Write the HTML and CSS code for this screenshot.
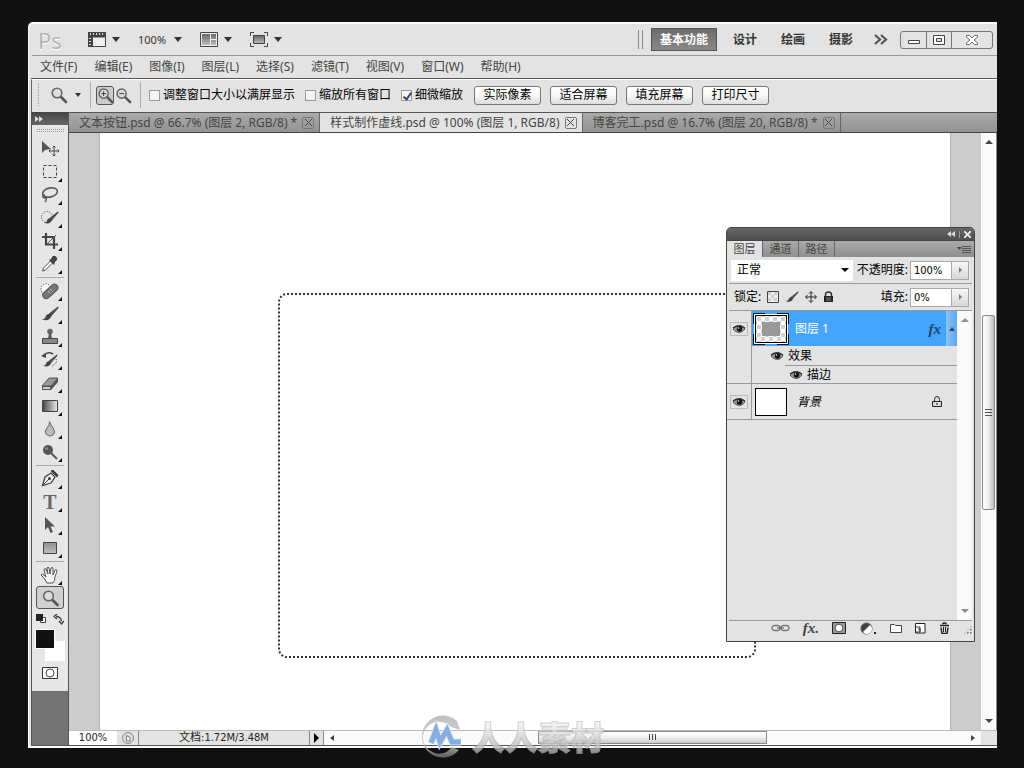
FILE: index.html
```html
<!DOCTYPE html>
<html lang="zh-CN">
<head>
<meta charset="utf-8">
<title>Photoshop</title>
<link rel="stylesheet" href="styles.css">
</head>
<body>
<svg class="defs" aria-hidden="true">
  <defs>
    <linearGradient id="metal" x1="0" y1="0" x2="0" y2="1"><stop offset="0" stop-color="#666"/><stop offset="1" stop-color="#bbb"/></linearGradient>
    <linearGradient id="soft" x1="0" y1="0" x2="0" y2="1"><stop offset="0" stop-color="#909090"/><stop offset="1" stop-color="#c0c0c0"/></linearGradient>
    <linearGradient id="fade"><stop offset="0" stop-color="#444"/><stop offset="1" stop-color="#eee"/></linearGradient>
    <symbol id="eye" viewBox="0 0 14 10"><path d="M1 5Q4 1 8 1.500Q12 2 13 5Q10 9 6.500 8.500Q3 8 1 5Z" fill="#999" stroke="#555"/><path d="M1 4Q6 0 13 4" fill="none" stroke="#333" stroke-width="1.300"/><circle cx="7.500" cy="5" r="2.700" fill="#111"/><circle cx="6.500" cy="4" r=".8" fill="#fff"/></symbol>
    <symbol id="glass" viewBox="0 0 18 18"><path d="M10.500 10.500L16 16" stroke="#555" stroke-width="2.600" stroke-linecap="round"/><circle cx="7" cy="7" r="4.800" fill="#ddd" stroke="#666" stroke-width="1.600"/></symbol>
    <symbol id="brush" viewBox="0 0 18 16"><path d="M17 1L8 8l2 2L17 2Z" fill="#555" stroke="#444"/><path d="M8.500 8Q5 8 4.500 11Q4 13 1 13.500Q8 16 10.500 10Z" fill="#444"/></symbol>
    <pattern id="checks" width="8" height="8" patternUnits="userSpaceOnUse"><path d="M0 0h8v8H0Z" fill="#fff"/><path d="M0 0h4v4H0ZM4 4h4v4H4Z" fill="#d0d0d0"/></pattern>
  </defs>
</svg>
<main class="window">
  <header class="appbar">
    <div class="logo">Ps</div>
    <button class="view" aria-label="查看额外内容"><svg width="18" height="15"><path d="M0 0h18v5H5v10H0Z" fill="#444"/><path d="M5 5h12.500v9.500H5" fill="#eee" stroke="#444"/><path d="M2.500 1v2M5.500 1v2M8.500 1v2M11.500 1v2M14.500 1v2M1 6.500h2M1 9.500h2M1 12.500h2" stroke="#ddd"/></svg><i class="caret"></i></button>
    <button class="view zoomlevel">100%<i class="caret"></i></button>
    <button class="view" aria-label="排列文档"><svg width="18" height="15"><path d="M.5.5h17v14H.5Z" fill="#eee" stroke="#444"/><path d="M2 2h8v11H2ZM11 2h5v5h-5ZM11 8h5v5h-5Z" fill="url(#metal)"/></svg><i class="caret"></i></button>
    <button class="view" aria-label="屏幕模式"><svg width="18" height="15"><path d="M.5 4V.5H4M14 .5h3.500V4M17.500 11v3.500H14M4 14.500H.5V11" fill="none" stroke="#444"/><path d="M3.500 3.500h11v8h-11Z" fill="url(#metal)" stroke="#444"/></svg><i class="caret"></i></button>
    <nav class="workspaces">
      <button class="workspace active">基本功能</button><button class="workspace">设计</button><button class="workspace">绘画</button><button class="workspace">摄影</button>
    </nav>
    <button class="more" aria-label="更多"><svg width="15" height="11"><path d="M1 1l5 4.500L1 10M7 1l5 4.500L7 10" fill="none" stroke="#555" stroke-width="2.200"/></svg></button>
    <div class="controls">
      <button aria-label="最小化"><svg width="14" height="12"><path d="M1.500 6.500h11v3h-11Z" fill="#fff" stroke="#444"/></svg></button><button aria-label="还原"><svg width="14" height="12"><path d="M1.500 1.500h11v9h-11Z" fill="#fff" stroke="#444"/><path d="M4.500 4.500h5v3h-5Z" fill="#ddd" stroke="#444"/></svg></button><button class="exit" aria-label="关闭"><svg width="14" height="12"><path d="M1.500 1.500h3L7 4l2.500-2.500h3V3L9 6l3.500 3v1.500h-3L7 8l-2.500 2.500h-3V9L5 6 1.500 3Z" fill="#fff" stroke="#666"/></svg></button>
    </div>
  </header>
  <nav class="menubar">
    <button>文件(F)</button><button>编辑(E)</button><button>图像(I)</button><button>图层(L)</button><button>选择(S)</button><button>滤镜(T)</button><button>视图(V)</button><button>窗口(W)</button><button>帮助(H)</button>
  </nav>
  <section class="options">
    <span class="grip"></span>
    <button class="preset" aria-label="缩放工具"><svg width="18" height="18"><use href="#glass"/></svg><i class="caret small"></i></button>
    <div class="zooms">
      <button class="pressed" aria-label="放大"><svg width="17" height="17" viewBox="0 0 18 18"><use href="#glass"/><path d="M4.500 7h5M7 4.500v5" stroke="#333"/></svg></button>
      <button aria-label="缩小"><svg width="17" height="17" viewBox="0 0 18 18"><use href="#glass"/><path d="M4.500 7h5" stroke="#333"/></svg></button>
    </div>
    <label class="check"><input type="checkbox">调整窗口大小以满屏显示</label>
    <label class="check"><input type="checkbox">缩放所有窗口</label>
    <label class="check"><input type="checkbox" checked>细微缩放</label>
    <div class="commands"><button>实际像素</button><button>适合屏幕</button><button>填充屏幕</button><button>打印尺寸</button></div>
  </section>
  <div class="workarea">
    <aside class="toolcolumn">
      <button class="expand" aria-label="展开"><svg width="8" height="6"><path d="M0 0l4 3-4 3ZM4 0l4 3-4 3Z" fill="#ddd"/></svg></button>
      <div class="toolbox">
        <span class="dots"></span>
        <div class="tools">
          <button class="tool plain" aria-label="移动"><svg width="20" height="18"><path d="M2 1v12l3-3 6-1Z" fill="#555"/><path d="M14 6v10M9 11h10M12.500 7.500L14 6l1.500 1.500M12.500 14.500L14 16l1.500-1.500M10.500 9.500L9 11l1.500 1.500M17.500 9.500L19 11l-1.500 1.500" fill="none" stroke="#444"/></svg></button>
          <button class="tool" aria-label="矩形选框"><svg width="20" height="18"><path d="M3.500 2.500h13v12h-13Z" fill="none" stroke="#444" stroke-dasharray="3 2"/></svg></button>
          <button class="tool" aria-label="套索"><svg width="20" height="18"><ellipse cx="10" cy="6.500" rx="7.500" ry="4.500" fill="none" stroke="#555" stroke-width="1.600" transform="rotate(-12 10 6.500)"/><path d="M5 9q-3 0-2 2t3 0q1 3-1 5" fill="none" stroke="#555" stroke-width="1.400"/></svg></button>
          <button class="tool" aria-label="快速选择"><svg width="20" height="18"><circle cx="7" cy="8" r="5.500" fill="none" stroke="#333" stroke-dasharray="1 1.500"/><use href="#brush" x="3" y="2" width="16" height="14"/></svg></button>
          <button class="tool" aria-label="裁剪"><svg width="20" height="18"><path d="M6 1v11.500h12M2 5h12v12" fill="none" stroke="#444" stroke-width="2.200"/><path d="M6 13L16 3" stroke="#555"/></svg></button>
          <button class="tool" aria-label="吸管"><svg width="20" height="18"><path d="M2.500 16l1-3 7-7 2 2-7 7Z" fill="#fff" stroke="#555"/><path d="M9 5l5 5 1-3 2-2q1-2-1-3.500T12 2l-1 2Z" fill="#444"/></svg></button>
        </div>
        <div class="tools">
          <button class="tool" aria-label="修复画笔"><svg width="20" height="18"><circle cx="6" cy="7" r="5" fill="#fff" stroke="#333" stroke-dasharray="1 1.500"/><rect x="1" y="6" width="18" height="7" rx="3.500" fill="#777" stroke="#555" transform="rotate(-42 10 9)"/><path d="M8 9l3 3M10 7l3 3" stroke="#ddd" stroke-dasharray="1 1"/></svg></button>
          <button class="tool" aria-label="画笔"><svg width="20" height="18"><use href="#brush" x="1" y="1" width="18" height="16"/></svg></button>
          <button class="tool" aria-label="仿制图章"><svg width="20" height="18"><circle cx="10" cy="3.500" r="2.800" fill="#666"/><path d="M9 5h2l1 6H8Z" fill="#555"/><path d="M2.500 10.500h15v5h-15Z" fill="#888" stroke="#444"/></svg></button>
          <button class="tool" aria-label="历史记录画笔"><svg width="20" height="18"><use href="#brush" x="2" y="3" width="16" height="14"/><path d="M13 3Q8 0 4 4" fill="none" stroke="#444" stroke-width="1.500"/><path d="M1 5l5-3v5Z" fill="#444"/><path d="M16 8q2 4-4 7" fill="none" stroke="#444" stroke-dasharray="1 1.500"/></svg></button>
          <button class="tool" aria-label="橡皮擦"><svg width="20" height="18"><path d="M2 12L9 4h9l-7 8Z" fill="#999" stroke="#555"/><path d="M2 12h9v4H2ZM11 12l7-8v4l-7 8Z" fill="#555"/><path d="M3 13h7v2H3Z" fill="#ccc"/></svg></button>
          <button class="tool" aria-label="渐变"><svg width="20" height="18"><path d="M2.500 3.500h15v11h-15Z" fill="url(#fade)" stroke="#444"/></svg></button>
          <button class="tool" aria-label="模糊"><svg width="20" height="18"><path d="M9.500 1.500q1 3 3.500 6.500t1 6q-4 4-8 0-2-3 1-6t2.500-6.500Z" fill="#bbb" stroke="#666"/></svg></button>
          <button class="tool" aria-label="减淡"><svg width="20" height="18"><circle cx="8" cy="7" r="5" fill="#555"/><path d="M11 10l6 6" stroke="#555" stroke-width="2"/><circle cx="6.500" cy="5.500" r="1.500" fill="#888"/></svg></button>
        </div>
        <div class="tools">
          <button class="tool" aria-label="钢笔"><svg width="20" height="18"><path d="M2.500 15.500L5 7l6-4 4 4-4 6Z" fill="#eee" stroke="#444" stroke-width="1.300"/><path d="M3 15l6-6M11 1l6 6 1-2-5-5Z" fill="#444" stroke="#444"/><circle cx="9.500" cy="8.500" r="1.500" fill="#444"/></svg></button>
          <button class="tool type" aria-label="文字">T</button>
          <button class="tool" aria-label="路径选择"><svg width="20" height="18"><path d="M5 1v13l3-3 2.500 6 2.500-1-2.500-5.500H15Z" fill="#555"/></svg></button>
          <button class="tool" aria-label="矩形"><svg width="20" height="18"><path d="M3.500 3.500h13v11h-13Z" fill="url(#soft)" stroke="#444"/></svg></button>
        </div>
        <div class="tools last">
          <button class="tool" aria-label="抓手"><svg width="20" height="18"><path d="M7 17l-3-5-3-3q1-2 3 0l2 2L4 4q0-2 2-1l2 5-1-6q1-2 2 0l1 6 1-6q1-1 2 0v7l2-5q2-1 2 1l-2 6q0 4-2 6Z" fill="#f4f4f4" stroke="#555"/></svg></button>
          <button class="tool plain selected" aria-label="缩放"><svg width="19" height="18" viewBox="0 0 18 18"><use href="#glass"/></svg></button>
        </div>
        <div class="swatchtools"><svg width="11" height="10"><path d="M4.500 3.500h5v5h-5Z" fill="#fff" stroke="#444"/><path d="M0 0h7v7H0Z" fill="#222"/></svg><svg width="11" height="11"><path d="M3 2.500q5 0 5.500 5M4 0L1 2.500 4 5M6 7l2.500 3L11 7" fill="none" stroke="#444" stroke-width="1.400"/></svg></div>
        <div class="swatches"><button class="back" aria-label="背景色"></button><button class="fore" aria-label="前景色"></button></div>
        <button class="mask" aria-label="快速蒙版"><svg width="17" height="13"><path d="M.5.5h15v11H.5Z" fill="#fff" stroke="#333"/><circle cx="8" cy="6" r="4" fill="none" stroke="#444"/></svg></button>
      </div>
    </aside>
    <section class="document">
      <nav class="tabs">
        <div class="tab"><span>文本按钮.psd @ 66.7% (图层 2, RGB/8) *</span><button class="close" aria-label="关闭"><svg width="7" height="7"><path d="M0 0l7 7M7 0L0 7" stroke="#444"/></svg></button></div>
        <div class="tab current"><span>样式制作虚线.psd @ 100% (图层 1, RGB/8)</span><button class="close" aria-label="关闭"><svg width="7" height="7"><path d="M0 0l7 7M7 0L0 7" stroke="#444"/></svg></button></div>
        <div class="tab"><span>博客完工.psd @ 16.7% (图层 20, RGB/8) *</span><button class="close" aria-label="关闭"><svg width="7" height="7"><path d="M0 0l7 7M7 0L0 7" stroke="#444"/></svg></button></div>
      </nav>
      <div class="viewport">
        <div class="canvas">
          <div class="page"><svg class="selection" width="478" height="365"><rect x="1" y="1" width="476" height="363" rx="8" fill="none" stroke="#333" stroke-width="2" stroke-dasharray="2 2"/></svg></div>
          <section class="panel">
            <header class="panelbar"><svg width="8" height="6"><path d="M4 0L0 3l4 3ZM8 0L4 3l4 3Z" fill="#ddd"/></svg><i></i><svg width="7" height="7"><path d="M0 0l7 7M7 0L0 7" stroke="#eee" stroke-width="1.800"/></svg></header>
            <nav class="paneltabs"><button class="on">图层</button><button>通道</button><button>路径</button><svg width="14" height="9"><path d="M0 2h5L2.500 5Z" fill="#444"/><path d="M5 1.500h9M5 3.500h9M5 5.500h9M5 7.500h9" stroke="#555"/></svg></nav>
            <div class="prow"><span class="choose"><select aria-label="混合模式"><option>正常</option></select></span><label for="opacity">不透明度:</label><input id="opacity" value="100%"><button class="step" aria-label="不透明度滑块"></button></div>
            <div class="prow locks"><span>锁定:</span>
              <svg width="12" height="12"><path d="M.5.5h11v11H.5Z" fill="#eee" stroke="#444"/><path d="M1 1h3v3H1ZM7 1h3v3H7ZM4 4h3v3H4ZM1 7h3v3H1ZM7 7h3v3H7Z" fill="#ccc"/></svg>
              <svg width="14" height="12"><use href="#brush"/></svg>
              <svg width="12" height="12"><path d="M6 1v10M1 6h10M4 2.500L6 .5l2 2M4 9.500l2 2 2-2M2.500 4L.5 6l2 2M9.500 4l2 2-2 2" fill="none" stroke="#222"/></svg>
              <svg width="11" height="12"><path d="M2.500 6V4q0-3 3-3t3 3v2" fill="none" stroke="#333" stroke-width="1.500"/><path d="M1 5h9v6H1Z" fill="#222"/><path d="M3 7h5M3 9h5" stroke="#888"/></svg>
              <label class="push" for="fill">填充:</label><input id="fill" value="0%"><button class="step" aria-label="填充滑块"></button></div>
            <div class="layers">
              <div class="layerlist">
                <div class="layer chosen"><span class="vis"><svg class="box" width="14" height="10"><use href="#eye"/></svg></span><div class="info"><svg class="thumb" width="36" height="32"><path d="M2.500 2.500h31v27h-31Z" fill="url(#checks)" stroke="#000"/><path d="M9 9h18v14H9Z" fill="#999"/><path d="M.5 11V.5H12M24 .5h11.500V11M35.500 21v10.500H24M12 31.500H.5V21" fill="none" stroke="#111"/><path d="M1.500 1.500h33v29h-33Z" fill="none" stroke="#fff"/></svg><span>图层 1</span><em class="fx">fx</em></div><button class="fold" aria-label="折叠"></button></div>
                <div class="effects"><span class="vis"></span><div class="sub"><div class="effect"><svg width="14" height="10"><use href="#eye"/></svg>效果</div><div class="effect nested"><svg width="14" height="10"><use href="#eye"/></svg>描边</div></div></div>
                <div class="layer"><span class="vis"><svg class="box" width="14" height="10"><use href="#eye"/></svg></span><div class="info"><i class="blank"></i><em>背景</em><svg class="locked" width="10" height="12"><path d="M2.500 5V3.500q0-3 2.500-3t2.500 3V5" fill="none" stroke="#222"/><path d="M.5 5.500h9v5h-9Z" fill="#ddd" stroke="#222"/><path d="M5 7v2" stroke="#222"/></svg></div></div>
              </div>
              <div class="layerscroll"><i class="up"></i><i class="down"></i></div>
            </div>
            <footer class="panelfoot">
              <svg width="19" height="10"><rect x="1" y="2.500" width="8" height="5" rx="2.500" fill="none" stroke="#777" stroke-width="1.300"/><rect x="10" y="2.500" width="8" height="5" rx="2.500" fill="none" stroke="#777" stroke-width="1.300"/><path d="M6 5h7" stroke="#555"/></svg>
              <em class="fx">fx.</em>
              <svg width="15" height="13"><path d="M.5.5h13v11H.5Z" fill="#999" stroke="#222"/><circle cx="7" cy="6" r="3.800" fill="#fff" stroke="#555"/></svg>
              <svg width="17" height="13"><circle cx="6.500" cy="6.500" r="5.500" fill="#444" stroke="#555"/><path d="M10 3a5 5 0 1 1-7 7Z" fill="#fff"/><path d="M14 10h2v2h-2Z" fill="#222"/></svg>
              <svg width="12" height="10"><path d="M.5 9.500v-8h4l1 1h6v7Z" fill="#fff" stroke="#444"/></svg>
              <svg width="11" height="11"><path d="M.5.5h9.500v9.500H.5Z" fill="#fff" stroke="#222"/><path d="M1 4h4v5H1M3 6h2v2" fill="none" stroke="#333"/></svg>
              <svg width="11" height="12"><path d="M1 3.500h9M3.500 2q2-2 4 0M2 5.500l1 6h5l1-6" fill="none" stroke="#222" stroke-width="1.500"/><path d="M4.500 5v5M6.500 5v5" stroke="#222"/></svg>
              <i class="resize"></i>
            </footer>
          </section>
        </div>
        <div class="vscroll"><i class="up"></i><div class="vtrack"><span class="vthumb"><svg width="8" height="8"><path d="M0 .5h7M0 3.500h7M0 6.500h7" stroke="#555"/></svg></span></div><i class="down"></i></div>
      </div>
      <footer class="status">
        <input class="scale" aria-label="显示比例" value="100%">
        <span class="clock"><svg width="12" height="12"><circle cx="6" cy="6" r="5.500" fill="#ddd" stroke="#888"/><path d="M4.500 9V3.500L8 5.500V9Z" fill="#fff" stroke="#777"/></svg></span>
        <span class="size">文档:1.72M/3.48M</span>
        <button class="play" aria-label="状态菜单"></button>
        <div class="hscroll"><i class="prev"></i><div class="htrack"><span class="hthumb"><svg width="9" height="7"><path d="M1.500 0v6M4.500 0v6M7.500 0v6" stroke="#444"/></svg></span></div><i class="next"></i></div>
        <span class="corner"></span>
      </footer>
    </section>
  </div>
  <div class="watermark"><svg width="44" height="44"><defs><linearGradient id="ring" x1="0" y1="0" x2="0" y2="1"><stop offset="0" stop-color="#b8b8b8"/><stop offset=".6" stop-color="#ccc"/><stop offset="1" stop-color="#666"/></linearGradient></defs><path d="M37 7A21 21 0 1 0 39 36L32 33A16 16 0 1 1 31 13L40 16Z" fill="url(#ring)" opacity=".9"/><path d="M11 29L16 16l4 12 7-12 5 12h9" fill="none" stroke="#d5e5f7" stroke-width="7"/><path d="M11 29L16 16l4 12 7-12 5 12h9" fill="none" stroke="#86aede" stroke-width="5"/></svg><span>人人素材</span></div>
</main>
</body>
</html>
```
FILE: styles.css
```css
* { box-sizing: border-box; }
body {
  margin: 0;
  height: 100vh;
  padding: 22px 27px 20px 28px;
  background: #111;
  color: #333;
  font: 12px/16px "Noto Sans", "Noto Sans CJK SC", sans-serif;
}
button, input, select { font: inherit; color: inherit; margin: 0; padding: 0; border: 0; background: none; border-radius: 0; }
button { display: flex; align-items: center; justify-content: center; white-space: nowrap; }
svg { display: block; flex: none; }
.defs { position: absolute; width: 0; height: 0; }

.window {
  position: relative;
  height: 100%;
  min-height: 640px;
  display: flex;
  flex-direction: column;
  background: #e3e3e3;
  border: 1px solid #fafafa;
  border-width: 2px 0 2px 1px;
  border-top-left-radius: 5px;
}
.appbar { display: flex; align-items: center; height: 32px; flex: none; margin-left: 3px; padding: 0 4px 0 6px; border-bottom: 1px solid #999; }
.logo { width: 50px; font: 22px/28px "Open Sans", sans-serif; color: #b4b4b4; text-shadow: 0 1px #fff; }
.view { gap: 6px; margin-right: 18px; }
.zoomlevel { gap: 8px; font-size: 11px; }
.caret { border: 4px solid transparent; border-top: 5px solid #333; border-bottom: 0; }
.caret.small { border-width: 4px 3px 0; }
.workspaces { display: flex; height: 23px; margin-left: auto; }
.workspaces::before { content: ""; width: 3px; height: 19px; margin: 2px 8px 0 0; border: 1px solid #888; border-width: 0 1px; }
.workspace { width: 48px; font-weight: bold; color: #333; }
.workspace.active { width: 66px; margin-right: 4px; background: linear-gradient(#6c6c6c, #888); border: 1px solid #555; color: #fff; }
.more { width: 35px; padding-right: 3px; }
.controls { display: flex; height: 18px; border: 1px solid #777; border-radius: 3px; }
.controls button { width: 25px; }
.controls button + button { border-left: 1px solid #777; }
.controls .exit { width: 41px; }
.menubar { display: flex; gap: 17px; align-items: center; height: 23px; flex: none; margin-left: 2px; padding-left: 9px; border-bottom: 1px solid #555; color: #444; }
.options { display: flex; align-items: center; height: 33px; flex: none; margin-left: 2px; padding: 0 0 2px 5px; border-top: 1px solid #fff; border-left: 1px solid #666; color: #000; }
.grip, .dots { background: conic-gradient(#999 25%, transparent 0) 0 0 / 2px 2px; }
.grip { width: 3px; height: 24px; }
.preset { gap: 7px; padding: 0 9px 0 10px; }
.zooms { display: flex; height: 26px; align-items: center; border: 1px solid #aaa; border-width: 0 1px; padding: 0 8px 0 5px; margin-right: 8px; }
.zooms button { width: 18px; height: 19px; }
.zooms .pressed { background: #ccc; border: 1px solid #555; border-radius: 3px; }
.check { display: flex; align-items: center; gap: 3px; margin-right: 10px; white-space: nowrap; }
.check input { appearance: none; position: relative; width: 11px; height: 11px; background: #f4f4f4; border: 1px solid #999; }
.check input:checked::after { content: ""; position: absolute; left: 3px; top: 0; width: 3px; height: 7px; border: solid #346; border-width: 0 2px 2px 0; transform: rotate(35deg); }
.commands { display: flex; gap: 9px; margin-left: 1px; }
.commands button { width: 67px; height: 19px; border: 1px solid #777; border-radius: 3px; background: linear-gradient(#fff, #f5f5f5 55%, #ddd); }

.workarea { flex: 1; min-height: 0; display: flex; margin-left: 2px; border-bottom: 1px solid #555; }
.toolcolumn { width: 38px; flex: none; display: flex; flex-direction: column; background: #737373; border: 1px solid #555; border-width: 0 1px; }
.expand { height: 13px; flex: none; justify-content: flex-start; padding-left: 3px; background: linear-gradient(#444, #666); }
.toolbox { background: #e6e6e6; padding: 4px 3px 11px; display: flex; flex-direction: column; align-items: center; }
.dots { width: 28px; height: 4px; margin-bottom: 3px; }
.tools { padding: 1px 0 2px; border-bottom: 1px solid #aaa; width: 28px; }
.tools.last { border: 0; padding: 1px 0 0; }
.tool { position: relative; width: 28px; height: 23px; }
.tool:not(.plain)::after { content: ""; position: absolute; right: 2px; bottom: 1px; border: 2px solid #111; border-top-color: transparent; border-left-color: transparent; }
.type { font: bold 20px/20px "Liberation Serif", serif; color: #666; }
.tool.selected { background: #d0d0d0; border: 1px solid #555; border-radius: 3px; }
.swatchtools { display: flex; justify-content: space-between; width: 28px; padding: 5px 0 4px; }
.swatches { position: relative; width: 30px; height: 32px; }
.swatches button { position: absolute; width: 20px; height: 20px; border: 1px solid #fff; }
.fore { left: 0; top: 0; background: #111; }
.back { right: 0; bottom: 0; background: #fff; }
.mask { margin-top: 6px; }

.document { flex: 1; min-width: 0; display: flex; flex-direction: column; }
.tabs { display: flex; height: 21px; flex: none; background: linear-gradient(#aaa, #929292); border-top: 1px solid #555; border-bottom: 1px solid #444; color: #444; }
.tab { display: flex; align-items: center; gap: 5px; padding: 0 5px 0 10px; white-space: nowrap; border-right: 1px solid #666; }
.tab.current { background: #e3e3e3; }
.close { width: 12px; height: 12px; border: 1px solid #777; border-radius: 2px; }
.viewport { flex: 1; min-height: 0; display: flex; }
.canvas { position: relative; flex: 1; padding: 0 31px; background: #ccc; }
.page { position: relative; height: 100%; background: #fff; box-shadow: 0 0 2px #888; clip-path: inset(0 -2px); }
.selection { position: absolute; left: 178px; top: 160px; }
.up, .down { border: 4px solid transparent; }
.up { border-top: 0; border-bottom-color: #444; }
.down { border-bottom: 0; border-top-color: #444; }
.vscroll { width: 16px; flex: none; display: flex; flex-direction: column; align-items: center; padding: 7px 1px; background: #fafafa; border-right: 1px solid #888; }
.vtrack { flex: 1; width: 100%; display: flex; flex-direction: column; padding: 4px 0; }
.vtrack::before { content: ""; flex: 168; }
.vtrack::after { content: ""; flex: 206; }
.vthumb { flex: 195; display: flex; align-items: center; justify-content: center; border: 1px solid #888; border-radius: 2px; background: linear-gradient(90deg, #fff, #eee 50%, #bbb); }

.status { display: flex; height: 15px; flex: none; border-top: 1px solid #bbb; color: #222; font: 11px/14px "DejaVu Sans Condensed", "Noto Sans CJK SC", sans-serif; }
.scale { width: 48px; background: #fff; text-align: center; }
.clock { width: 22px; display: flex; align-items: center; justify-content: center; border-right: 1px solid #888; }
.size { width: 171px; text-align: center; border-right: 1px solid #888; white-space: nowrap; }
.play { width: 14px; border-right: 1px solid #888; }
.play::before { content: ""; border: 5px solid transparent; border-left-color: #000; border-right: 0; }
.hscroll { flex: 1; display: flex; align-items: center; padding: 0 6px; background: #fafafa; }
.prev, .next { border: 3px solid transparent; }
.prev { border-left: 0; border-right: 4px solid #444; }
.next { border-right: 0; border-left: 4px solid #444; }
.htrack { flex: 1; height: 100%; display: flex; }
.htrack::before, .htrack::after { content: ""; flex: 204; }
.hthumb { flex: 228; height: 13px; display: flex; align-items: center; justify-content: center; border: 1px solid #888; background: linear-gradient(#fff, #eee 50%, #ccc); }
.corner { width: 16px; background: #e3e3e3; }

.panel { position: absolute; right: 6px; top: 94px; width: 249px; height: 415px; display: flex; flex-direction: column; background: #e3e3e3; border: 1px solid #444; border-radius: 5px 5px 0 0; color: #000; }
.panelbar { display: flex; align-items: center; justify-content: flex-end; gap: 4px; height: 12px; flex: none; padding-right: 3px; background: linear-gradient(#666, #505050); border-radius: 4px 4px 0 0; }
.panelbar i { width: 1px; height: 7px; background: #999; }
.paneltabs { display: flex; height: 17px; flex: none; background: linear-gradient(#aaa, #8e8e8e); color: #444; border-top: 1px solid #444; }
.paneltabs button { width: 36px; border-right: 1px solid #666; font-size: 11px; }
.paneltabs .on { background: #e3e3e3; }
.paneltabs svg { margin: 4px 3px 0 auto; }
.prow { display: flex; align-items: center; height: 27px; flex: none; margin: 0 2px; padding: 0 3px 0 2px; border-bottom: 1px solid #999; white-space: nowrap; }
.prow input { width: 42px; height: 19px; padding-left: 3px; background: #fff; border: 1px solid #aaa; font: 11px/15px "DejaVu Sans Condensed", sans-serif; }
.prow label { margin-right: 2px; }
.choose { flex: 1; display: flex; align-items: center; height: 21px; margin-right: 4px; padding-right: 4px; background: #fff; }
.choose select { flex: 1; appearance: none; padding-left: 6px; }
.choose::after { content: ""; border: 4px solid transparent; border-top-color: #000; border-bottom: 0; }
.step { width: 17px; height: 19px; border: 1px solid #aaa; border-left: 0; background: linear-gradient(#f6f6f6, #d8d8d8); }
.step::before { content: ""; border: 3px solid transparent; border-left-color: #778; border-right: 0; }
.locks { gap: 6px; padding-left: 5px; }
.locks input { margin-left: -6px; }
.locks .step { margin-left: -6px; }
.locks .push { margin-left: auto; }
.layers { flex: 1; display: flex; margin: 0 2px 0 0; }
.layerlist { flex: 1; }
.layerscroll { width: 15px; display: flex; flex-direction: column; align-items: center; justify-content: space-between; padding: 7px 0; background: #fafafa; }
.layerscroll i { opacity: .6; }
.layer { display: flex; height: 36px; border-bottom: 1px solid #999; }
.chosen { height: 35px; border: 0; }
.vis { width: 25px; flex: none; display: flex; align-items: center; justify-content: center; border-right: 1px solid #999; }
.box { outline: 1px solid #bbb; outline-offset: 1px; }
.info { flex: 1; display: flex; align-items: center; }
.chosen .info { background: #43a5ff; color: #fff; padding-left: 1px; gap: 6px; }
.fx { margin-left: auto; font: italic bold 15px/16px "Liberation Serif", serif; color: #246; }
.chosen .fx { margin-right: 5px; }
.fold { width: 11px; background: linear-gradient(90deg, #8bc5f8, #5aa8f0); }
.fold::before { content: ""; border: 3px solid transparent; border-top: 0; border-bottom: 4px solid #345; }
.effects { display: flex; height: 38px; border-bottom: 1px solid #999; }
.sub { flex: 1; }
.effect { display: flex; align-items: center; gap: 4px; height: 19px; padding-left: 18px; }
.nested { margin-left: 33px; padding-left: 4px; height: 18px; border-top: 1px solid #999; }
.blank { width: 32px; height: 28px; margin: 0 10px 0 3px; background: #fff; border: 1px solid #000; }
.info em { font-style: italic; }
.locked { margin: 0 15px 0 auto; }
.panelfoot { display: flex; align-items: center; justify-content: flex-end; gap: 13px; height: 21px; flex: none; margin: 0 2px; padding-bottom: 6px; border-top: 1px solid #999; }
.panelfoot .fx { margin: 0; color: #444; }
.resize { width: 9px; height: 9px; align-self: flex-end; background: conic-gradient(#888 25%, transparent 0) 0 0 / 3px 3px; clip-path: polygon(100% 0, 100% 100%, 0 100%); }

.watermark { position: absolute; left: 391px; bottom: -12px; display: flex; align-items: center; gap: 8px; pointer-events: none; }
.watermark span { font: 900 33px/44px "Noto Sans CJK SC", sans-serif; color: transparent; background: linear-gradient(#f0f0f0 25%, #b4b4b4 85%); background-clip: text; -webkit-text-stroke: 1px rgba(150, 150, 150, .45); opacity: .8; }
```
